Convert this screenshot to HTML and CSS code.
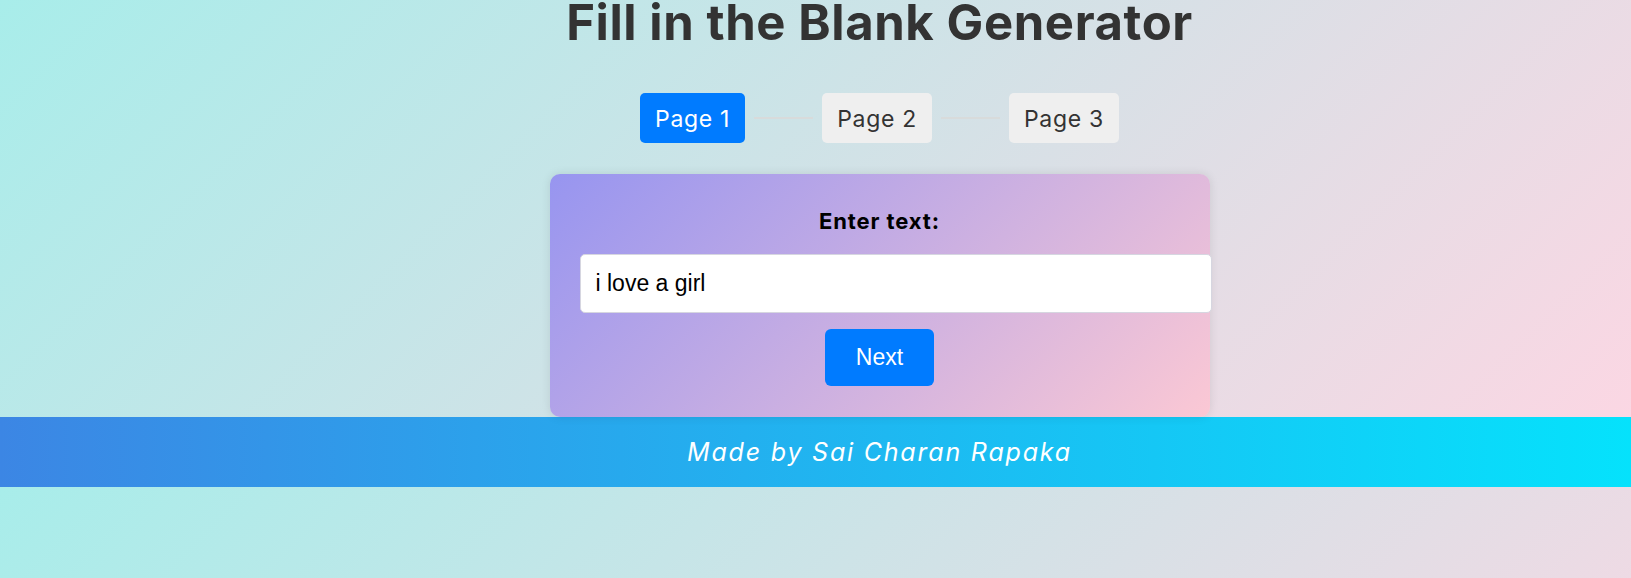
FILE: index.html
```html
<!DOCTYPE html>
<html lang="en">
<head>
<meta charset="UTF-8">
<title>Fill in the Blank Generator</title>
<link rel="stylesheet" href="styles.css">
</head>
<body>
<div class="page">
  <h1 class="title">Fill in the Blank Generator</h1>
  <div class="steps">
    <div class="step active">Page 1</div>
    <div class="step-line"></div>
    <div class="step">Page 2</div>
    <div class="step-line"></div>
    <div class="step">Page 3</div>
  </div>
  <div class="card">
    <label class="label" for="text">Enter text:</label>
    <input class="text-input" id="text" type="text" value="i love a girl">
    <button class="next-btn">Next</button>
  </div>
</div>
<footer class="footer">Made by Sai Charan Rapaka</footer>
</body>
</html>
```

FILE: styles.css
```css
html, body {
  margin: 0;
  padding: 0;
}

body {
  font-family: "Inter", "Noto Sans", sans-serif;
  background: linear-gradient(135deg, #a8edea 0%, #fed6e3 100%);
  color: #333;
}

.page {
  padding-left: 128px;
  display: flex;
  flex-direction: column;
  align-items: center;
}

.title {
  margin: 0;
  font-size: 49px;
  line-height: 46px;
  font-weight: 700;
  letter-spacing: 0.6px;
  color: #333;
}

.steps {
  margin-top: 47px;
  display: flex;
  align-items: center;
}

.step {
  padding: 2px 15px 0;
  line-height: 48px;
  font-size: 23px;
  letter-spacing: 0.7px;
  background: #efefef;
  color: #333;
  border-radius: 5px;
}

.step.active {
  background: #007bff;
  color: #fff;
}

.step-line {
  width: 59px;
  height: 2px;
  margin: 0 9px;
  background: #d8dbdb;
}

.card {
  margin-top: 31px;
  width: 600px;
  padding: 32px 30px 31px;
  border-radius: 10px;
  background: linear-gradient(135deg, #9795f0 0%, #fbc8d4 100%);
  box-shadow: 0 0 10px rgba(0, 0, 0, 0.1);
  display: flex;
  flex-direction: column;
  align-items: center;
}

.label {
  font-size: 22px;
  line-height: 30px;
  font-weight: 700;
  letter-spacing: 0.9px;
  color: #000;
  margin-bottom: 18px;
}

.text-input {
  align-self: flex-start;
  width: 100%;
  padding: 15px;
  font-family: "Liberation Sans", Arial, sans-serif;
  font-size: 23px;
  line-height: 27px;
  color: #000;
  background: #fff;
  border: 1px solid #d6d6e0;
  border-radius: 5px;
  outline: none;
}

.next-btn {
  margin-top: 16px;
  padding: 15px 31px;
  font-family: "Liberation Sans", Arial, sans-serif;
  font-size: 23px;
  line-height: 27px;
  color: #fff;
  background: #007bff;
  border: none;
  border-radius: 6px;
}

.footer {
  padding-left: 128px;
  height: 70px;
  line-height: 70px;
  text-align: center;
  font-size: 25px;
  font-style: italic;
  letter-spacing: 1.8px;
  color: #fff;
  background: linear-gradient(to right, #3c86e4 0%, #05e2fc 100%);
}
```
